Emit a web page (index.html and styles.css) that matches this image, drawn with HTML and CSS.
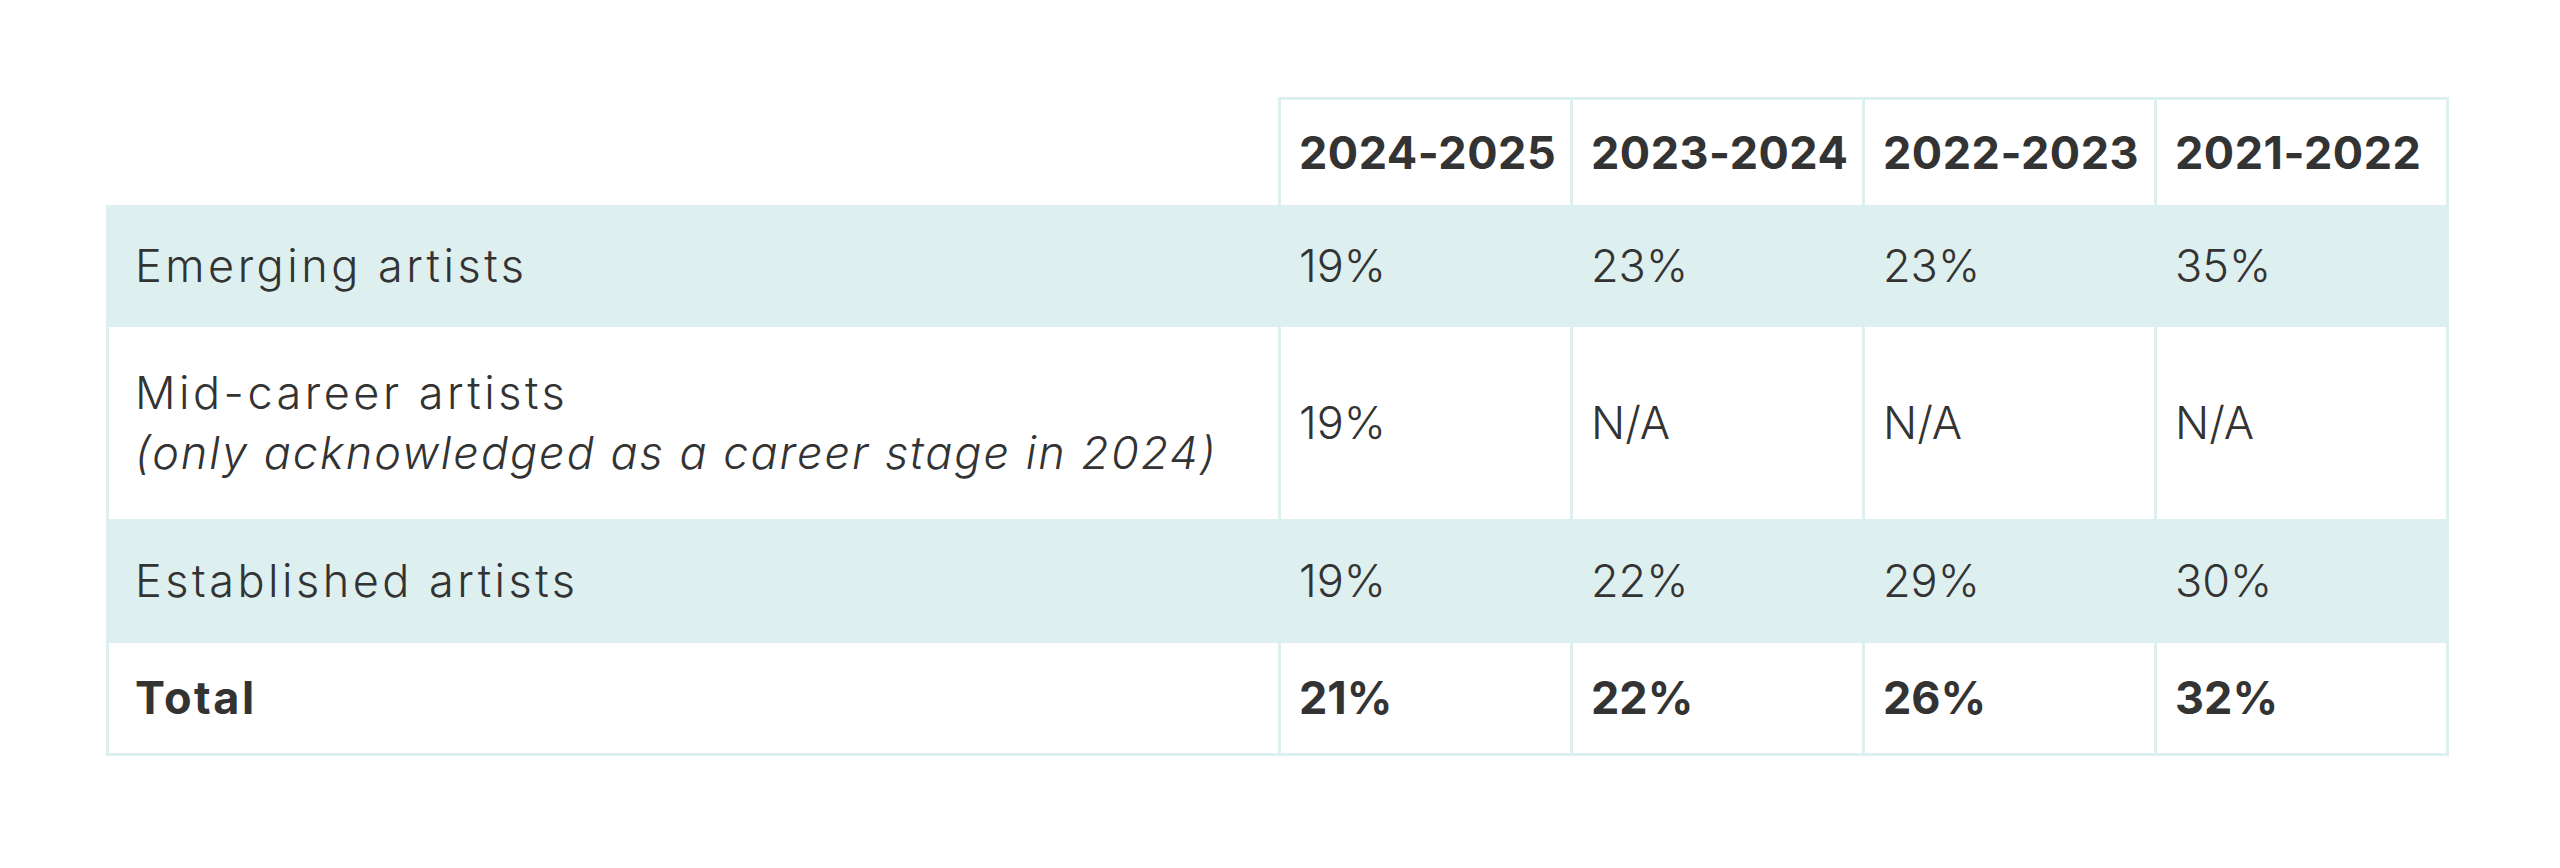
FILE: index.html
```html
<!DOCTYPE html>
<html lang="en">
<head>
<meta charset="utf-8">
<title>Career stage table</title>
<link rel="stylesheet" href="styles.css">
</head>
<body>
<main class="page">
  <table class="stats">
    <colgroup>
      <col class="col-label">
      <col class="col-year">
      <col class="col-year">
      <col class="col-year">
      <col class="col-year">
    </colgroup>
    <thead>
      <tr class="row-head">
        <th class="blank"></th>
        <th>2024-2025</th>
        <th>2023-2024</th>
        <th>2022-2023</th>
        <th>2021-2022</th>
      </tr>
    </thead>
    <tbody>
      <tr class="row-shade row-emerging">
        <td class="label">Emerging artists</td>
        <td>19%</td>
        <td>23%</td>
        <td>23%</td>
        <td>35%</td>
      </tr>
      <tr class="row-mid">
        <td class="label">Mid-career artists<br><em class="note">(only acknowledged as a career stage in 2024)</em></td>
        <td>19%</td>
        <td>N/A</td>
        <td>N/A</td>
        <td>N/A</td>
      </tr>
      <tr class="row-shade row-established">
        <td class="label">Established artists</td>
        <td>19%</td>
        <td>22%</td>
        <td>29%</td>
        <td>30%</td>
      </tr>
      <tr class="row-total">
        <td class="label">Total</td>
        <td>21%</td>
        <td>22%</td>
        <td>26%</td>
        <td>32%</td>
      </tr>
    </tbody>
  </table>
</main>
</body>
</html>
```

FILE: styles.css
```css
html, body {
  margin: 0;
  padding: 0;
  background: #ffffff;
}

.page {
  padding: 97px 0 0 106px;
}

.stats {
  width: 2343px;
  table-layout: fixed;
  border-collapse: collapse;
  font-family: "Inter", "Lato", sans-serif;
  font-size: 45px;
  font-weight: 300;
  color: #333333;
}

.col-label {
  width: 1172px;
}

.stats th,
.stats td {
  border: 3px solid #ddefee;
  text-align: left;
  vertical-align: middle;
  padding: 0 6px 0 18px;
  line-height: 60px;
}

.stats th {
  font-weight: 700;
  font-size: 45px;
  letter-spacing: 0.5px;
}

.stats th.blank {
  border-top: none;
  border-left: none;
}

.stats td.label {
  padding-left: 26px;
  letter-spacing: 3.5px;
}

.row-head { height: 108px; }
.row-emerging { height: 119px; }
.row-mid { height: 195px; }
.row-established { height: 121px; }
.row-total { height: 113px; }

.row-shade td {
  background: #ddefee;
}

.note {
  font-style: italic;
  letter-spacing: 2px;
}

.row-total td {
  font-weight: 700;
}

.row-total td.label {
  letter-spacing: 2.5px;
}
```
